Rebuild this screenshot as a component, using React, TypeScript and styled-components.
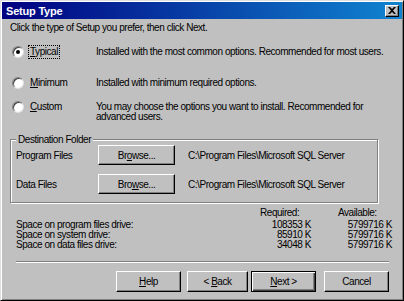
import React from 'react'
import styled, { createGlobalStyle } from 'styled-components'

const GlobalStyle = createGlobalStyle`
  body {
    margin: 0;
    background: #c0c0c0;
    font-family: "Liberation Sans", Arial, sans-serif;
    font-size: 10px;
    letter-spacing: -0.45px;
    color: #000;
    white-space: nowrap;
  }
`

const Window = styled.div`
  width: 404px;
  height: 301px;
  box-sizing: border-box;
  background: #c0c0c0;
  border: 1px solid;
  border-color: #dfdfdf #000 #000 #dfdfdf;
  box-shadow: inset 1px 1px #fff, inset -1px -1px #808080;
  padding: 1px;
  display: flex;
  flex-direction: column;
  overflow: hidden;
`

const TitleBar = styled.div`
  height: 17px;
  flex-shrink: 0;
  display: flex;
  align-items: center;
  justify-content: space-between;
  padding: 0 3px 0 4px;
  background: linear-gradient(to right, #000080, #1084d0);
  color: #fff;
  font-weight: bold;
  font-size: 11px;
  letter-spacing: -0.2px;
`

const CloseButton = styled.div`
  width: 14px;
  height: 12px;
  box-sizing: border-box;
  background: #c0c0c0;
  border: 1px solid;
  border-color: #fff #000 #000 #fff;
  box-shadow: inset -1px -1px #808080;
  display: flex;
  align-items: center;
  justify-content: center;
`

const Body = styled.div`
  padding: 3px 0 0 8px;
  display: flex;
  flex-direction: column;
`

const Intro = styled.div`
  line-height: 12px;
`

const OptionRow = styled.div<{ $top: number }>`
  display: grid;
  grid-template-columns: 84px 1fr;
  align-items: start;
  margin-top: ${(p) => p.$top}px;
  padding-left: 2px;
`

const RadioLabel = styled.div`
  display: flex;
  align-items: center;
  height: 14px;
`

const RadioCircle = styled.span<{ $checked?: boolean }>`
  width: 12px;
  height: 12px;
  box-sizing: border-box;
  border-radius: 50%;
  background: #fff;
  border: 1px solid;
  border-color: #808080 #dfdfdf #dfdfdf #808080;
  box-shadow: inset 1px 1px #404040;
  display: flex;
  align-items: center;
  justify-content: center;
  margin-right: 4px;

  &::after {
    content: '';
    width: 4px;
    height: 4px;
    border-radius: 50%;
    background: ${(p) => (p.$checked ? '#000' : 'transparent')};
  }
`

const LabelText = styled.span<{ $focus?: boolean }>`
  line-height: 12px;
  padding: 0 1px;
  border: 1px dotted ${(p) => (p.$focus ? '#000' : 'transparent')};
`

const Desc = styled.div`
  padding-top: 2px;
  line-height: 10px;
`

const Group = styled.div`
  position: relative;
  margin-top: 17px;
  width: 368px;
  box-sizing: border-box;
  border: 1px solid #808080;
  box-shadow: inset 1px 1px #fff, 1px 1px #fff;
  padding: 5px 0 8px 5px;
  display: flex;
  flex-direction: column;
  gap: 9px;
`

const Legend = styled.span`
  position: absolute;
  top: -6px;
  left: 5px;
  padding: 0 2px;
  line-height: 11px;
  background: #c0c0c0;
`

const FolderRow = styled.div`
  display: flex;
  align-items: center;
  height: 20px;
`

const FolderLabel = styled.span`
  width: 82px;
`

const Button = styled.div<{ $width: number; $default?: boolean }>`
  width: ${(p) => p.$width}px;
  height: 20px;
  box-sizing: border-box;
  display: flex;
  align-items: center;
  justify-content: center;
  background: #c0c0c0;
  border: 1px solid;
  border-color: ${(p) => (p.$default ? '#000' : '#fff #000 #000 #fff')};
  box-shadow: ${(p) =>
    p.$default
      ? 'inset 1px 1px #fff, inset -1px -1px #404040, inset -2px -2px #808080'
      : 'inset -1px -1px #808080'};
`

const Path = styled.span`
  margin-left: 13px;
`

const SpaceTable = styled.div`
  margin: 5px 0 0 6px;
  display: grid;
  grid-template-columns: 244px 51px 27px 54px;
  line-height: 10px;
`

const Head = styled.span`
  margin-bottom: 2px;
`

const Num = styled.span`
  text-align: right;
`

const Separator = styled.div`
  margin: 11px 0 0 6px;
  width: 373px;
  height: 1px;
  background: #808080;
  border-bottom: 1px solid #fff;
`

const ButtonRow = styled.div`
  margin: 8px 0 0 106px;
  display: flex;
  height: 21px;
`

const ActionButton = styled(Button)<{ $gap?: number }>`
  height: 21px;
  margin-left: ${(p) => p.$gap ?? 0}px;
`

const U = styled.span`
  text-decoration: underline;
`

const rows = [
  ['Space on program files drive:', '108353 K', '5799716 K'],
  ['Space on system drive:', '85910 K', '5799716 K'],
  ['Space on data files drive:', '34048 K', '5799716 K'],
]

export default function App() {
  return (
    <>
      <GlobalStyle />
      <Window>
        <TitleBar>
          <span>Setup Type</span>
          <CloseButton>
            <svg width="8" height="7" viewBox="0 0 8 7">
              <path d="M0 0h2l2 2 2-2h2L5 3.5 8 7H6L4 5 2 7H0l3-3.5z" fill="#000" />
            </svg>
          </CloseButton>
        </TitleBar>
        <Body>
          <Intro>Click the type of Setup you prefer, then click Next.</Intro>

          <OptionRow $top={11}>
            <RadioLabel>
              <RadioCircle $checked />
              <LabelText $focus>
                <U>T</U>ypical
              </LabelText>
            </RadioLabel>
            <Desc>Installed with the most common options. Recommended for most users.</Desc>
          </OptionRow>
          <OptionRow $top={17}>
            <RadioLabel>
              <RadioCircle />
              <LabelText>
                <U>M</U>inimum
              </LabelText>
            </RadioLabel>
            <Desc>Installed with minimum required options.</Desc>
          </OptionRow>
          <OptionRow $top={10}>
            <RadioLabel>
              <RadioCircle />
              <LabelText>
                <U>C</U>ustom
              </LabelText>
            </RadioLabel>
            <Desc>
              You may choose the options you want to install. Recommended for
              <br />
              advanced users.
            </Desc>
          </OptionRow>

          <Group>
            <Legend>Destination Folder</Legend>
            <FolderRow>
              <FolderLabel>Program Files</FolderLabel>
              <Button $width={77}>
                <span>
                  Br<U>o</U>wse...
                </span>
              </Button>
              <Path>C:\Program Files\Microsoft SQL Server</Path>
            </FolderRow>
            <FolderRow>
              <FolderLabel>Data Files</FolderLabel>
              <Button $width={77}>
                <span>
                  Bro<U>w</U>se...
                </span>
              </Button>
              <Path>C:\Program Files\Microsoft SQL Server</Path>
            </FolderRow>
          </Group>

          <SpaceTable>
            <span />
            <Head>Required:</Head>
            <span />
            <Head>Available:</Head>
            {rows.map(([label, req, avail]) => (
              <React.Fragment key={label}>
                <span>{label}</span>
                <Num>{req}</Num>
                <span />
                <Num>{avail}</Num>
              </React.Fragment>
            ))}
          </SpaceTable>

          <Separator />

          <ButtonRow>
            <ActionButton $width={65}>
              <span>
                <U>H</U>elp
              </span>
            </ActionButton>
            <ActionButton $width={61} $gap={6}>
              <span>
                &lt; <U>B</U>ack
              </span>
            </ActionButton>
            <ActionButton $width={65} $gap={3} $default>
              <span>
                <U>N</U>ext &gt;
              </span>
            </ActionButton>
            <ActionButton $width={65} $gap={8}>
              Cancel
            </ActionButton>
          </ButtonRow>
        </Body>
      </Window>
    </>
  )
}
